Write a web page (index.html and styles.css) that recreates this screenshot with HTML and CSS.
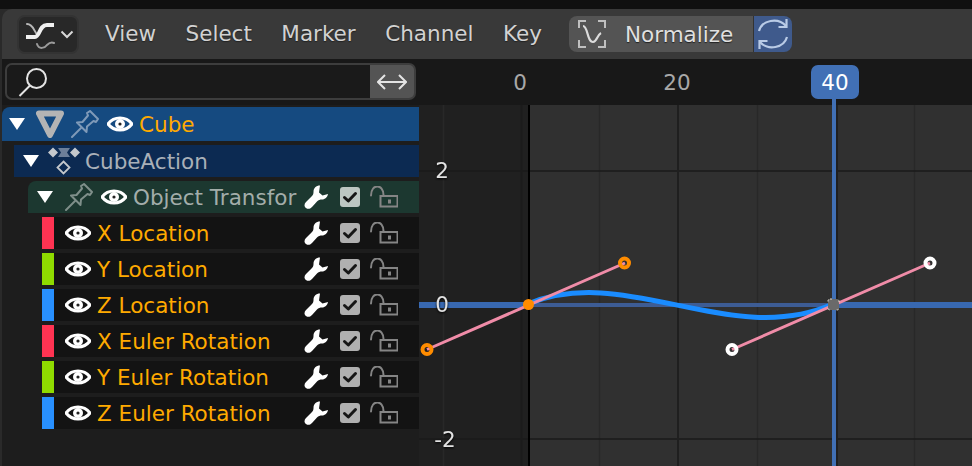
FILE: index.html
```html
<!DOCTYPE html>
<html lang="en">
<head>
<meta charset="utf-8">
<title>Graph Editor</title>
<link rel="stylesheet" href="styles.css">
</head>
<body>
<svg class="defs" width="0" height="0" aria-hidden="true">
  <defs>
    <symbol id="eye" viewBox="0 0 26 18">
      <path d="M1 9C7 1 19 1 25 9C19 17 7 17 1 9Z" fill="none" stroke="#fff" stroke-width="3.200" stroke-linejoin="round"/>
      <circle cx="13" cy="9" r="5" fill="#fff"/>
      <circle cx="13" cy="9" r="1.600" fill="#222"/>
    </symbol>
    <symbol id="pin" viewBox="0 0 28 28">
      <path d="M1 27L10 18" fill="none" stroke="currentColor" stroke-width="2" stroke-linecap="round"/>
      <path d="M6 12.500L11.500 12L17 5.500L16 3L19 1L27 9L25 12L22.500 11L16 16.500L15.500 22Z" fill="none" stroke="currentColor" stroke-width="2" stroke-linejoin="round"/>
    </symbol>
    <symbol id="wrench" viewBox="0 0 24 24">
      <path d="M16 .5C12 .5 9.500 3 9.500 7C9.500 9 9 10 7.500 11.500L2 17C0 19 0 21.500 2 23C4 24.500 6 24 8 22L13 16.500C14.500 15 16 14.500 18 14.500C21 14.500 23.500 12 24 9L18.500 10.500L15 7.500Z" fill="#fff"/>
    </symbol>
    <symbol id="check" viewBox="0 0 20 20">
      <rect width="20" height="20" rx="3" fill="currentColor"/>
      <path d="M4.500 10.500L8.300 14L15.500 6.500" fill="none" stroke="#161616" stroke-width="3" stroke-linecap="round" stroke-linejoin="round"/>
    </symbol>
    <symbol id="lock" viewBox="0 0 28 22">
      <path d="M1 9.500C1 -2.500 13.500 -2.500 13.500 9" fill="none" stroke="#858585" stroke-width="2" stroke-linecap="round"/>
      <rect x="10.500" y="10" width="17" height="10.500" fill="none" stroke="#858585" stroke-width="2"/>
      <rect x="18" y="13.500" width="3" height="4" fill="#858585"/>
    </symbol>
  </defs>
</svg>

<div class="topband"></div>
<header class="header">
  <button class="editor-btn">
    <svg class="icon-editor" viewBox="0 0 30 30" width="30" height="30">
      <path d="M1 4C8 4 8 13 12 15" fill="none" stroke="#b8b8b8" stroke-width="2" stroke-linecap="round"/>
      <path d="M0 17H9C14 17 13 5 21 5H28" fill="none" stroke="#f0f0f0" stroke-width="4"/>
      <path d="M11 24C13 30 19 28 21 25C23 23 26 22 28 23" fill="none" stroke="#9c9c9c" stroke-width="2" stroke-linecap="round"/>
    </svg>
    <svg viewBox="0 0 14 9" width="14" height="9"><path d="M1.500 1.500L7 7L12.500 1.500" fill="none" stroke="#d8d8d8" stroke-width="2"/></svg>
  </button>
  <nav class="menu">
    <span>View</span><span>Select</span><span>Marker</span><span>Channel</span><span>Key</span>
  </nav>
  <div class="normalize">
    <div class="normalize-btn">
      <svg viewBox="0 0 28 28" width="28" height="28">
        <path d="M1 8V1H8M20 1H27V8M27 20V27H20M8 27H1V20" fill="none" stroke="#c0c0c0" stroke-width="2"/>
        <path d="M5 6C10 6 9 22 15 22C19 22 19 15 23 13" fill="none" stroke="#dcdcdc" stroke-width="2.200"/>
      </svg>
      <span>Normalize</span>
    </div>
    <div class="sync-btn">
      <svg viewBox="0 0 32 32" width="32" height="32">
        <path d="M2 13C5 2 21 -1 29 8M30 19C27 30 11 33 3 24" fill="none" stroke="#b9cbe6" stroke-width="2.200"/>
        <path d="M29.500 1V9H21.500M2.500 31V23H10.500" fill="none" stroke="#b9cbe6" stroke-width="2.200"/>
      </svg>
    </div>
  </div>
</header>

<main class="main">
  <aside class="channels">
    <div class="searchbar">
      <div class="search-field">
        <svg viewBox="0 0 30 30" width="30" height="30">
          <circle cx="18.500" cy="11.500" r="9.500" fill="none" stroke="#e4e4e4" stroke-width="2"/>
          <path d="M12 18.500L1.500 29" fill="none" stroke="#e4e4e4" stroke-width="2"/>
        </svg>
      </div>
      <div class="search-toggle">
        <svg viewBox="0 0 30 16" width="30" height="16"><path d="M1 8H29M8 1L1 8L8 15M22 1L29 8L22 15" fill="none" stroke="#e4e4e4" stroke-width="2"/></svg>
      </div>
    </div>
    <div class="tree">
      <div class="row row-object">
        <i class="tri"></i>
        <svg class="mesh" viewBox="0 0 28 28" width="28" height="28"><path d="M3 3.500H25L14 25Z" fill="none" stroke="#b4b4b4" stroke-width="6" stroke-linejoin="round"/></svg>
        <svg class="pin pin-blue"><use href="#pin"/></svg>
        <svg class="eye"><use href="#eye"/></svg>
        <span class="name name-sel">Cube</span>
      </div>
      <div class="row row-action">
        <i class="tri"></i>
        <svg class="action" viewBox="0 0 32 28" width="32" height="28">
          <path d="M5 0.500L10 5.500L5 10.500L0 5.500Z" fill="#c4c8cc"/>
          <path d="M27 0.500L32 5.500L27 10.500L22 5.500Z" fill="#c4c8cc"/>
          <path d="M10 1H22L19 5.500L22 10H10L13 5.500Z" fill="#6d7f99"/>
          <path d="M15.500 14.500L21.500 20.500L15.500 26.500L9.500 20.500Z" fill="none" stroke="#c4c8cc" stroke-width="1.800"/>
        </svg>
        <span class="name name-action">CubeAction</span>
      </div>
      <div class="row row-group">
        <i class="tri"></i>
        <svg class="pin pin-gray"><use href="#pin"/></svg>
        <svg class="eye"><use href="#eye"/></svg>
        <span class="name name-group">Object Transforms</span>
        <div class="tools tools-group">
          <svg class="wrench"><use href="#wrench"/></svg>
          <svg class="check"><use href="#check"/></svg>
          <svg class="lock"><use href="#lock"/></svg>
        </div>
      </div>
      <div class="row row-fcurve">
        <i class="swatch swatch-x"></i>
        <svg class="eye"><use href="#eye"/></svg>
        <span class="name name-sel">X Location</span>
        <div class="tools"><svg class="wrench"><use href="#wrench"/></svg><svg class="check"><use href="#check"/></svg><svg class="lock"><use href="#lock"/></svg></div>
      </div>
      <div class="row row-fcurve">
        <i class="swatch swatch-y"></i>
        <svg class="eye"><use href="#eye"/></svg>
        <span class="name name-sel">Y Location</span>
        <div class="tools"><svg class="wrench"><use href="#wrench"/></svg><svg class="check"><use href="#check"/></svg><svg class="lock"><use href="#lock"/></svg></div>
      </div>
      <div class="row row-fcurve">
        <i class="swatch swatch-z"></i>
        <svg class="eye"><use href="#eye"/></svg>
        <span class="name name-sel">Z Location</span>
        <div class="tools"><svg class="wrench"><use href="#wrench"/></svg><svg class="check"><use href="#check"/></svg><svg class="lock"><use href="#lock"/></svg></div>
      </div>
      <div class="row row-fcurve">
        <i class="swatch swatch-x"></i>
        <svg class="eye"><use href="#eye"/></svg>
        <span class="name name-sel">X Euler Rotation</span>
        <div class="tools"><svg class="wrench"><use href="#wrench"/></svg><svg class="check"><use href="#check"/></svg><svg class="lock"><use href="#lock"/></svg></div>
      </div>
      <div class="row row-fcurve">
        <i class="swatch swatch-y"></i>
        <svg class="eye"><use href="#eye"/></svg>
        <span class="name name-sel">Y Euler Rotation</span>
        <div class="tools"><svg class="wrench"><use href="#wrench"/></svg><svg class="check"><use href="#check"/></svg><svg class="lock"><use href="#lock"/></svg></div>
      </div>
      <div class="row row-fcurve">
        <i class="swatch swatch-z"></i>
        <svg class="eye"><use href="#eye"/></svg>
        <span class="name name-sel">Z Euler Rotation</span>
        <div class="tools"><svg class="wrench"><use href="#wrench"/></svg><svg class="check"><use href="#check"/></svg><svg class="lock"><use href="#lock"/></svg></div>
      </div>
    </div>
  </aside>

  <section class="graph">
    <svg class="plot" viewBox="419 59 553 407" width="553" height="407">
      <rect class="bg-out" x="419" y="105" width="110" height="361"/>
      <rect class="bg-in" x="529" y="105" width="443" height="361"/>
      <g class="grid-minor">
        <path d="M443.500 105V466M599.500 105V466M757.500 105V466M914.500 105V466"/>
      </g>
      <g class="grid-major">
        <path d="M521.500 105V466M678 105V466M837 105V466M419 171H972M419 439H972"/>
      </g>
      <path class="frame-start" d="M529 105V466"/>
      <path class="zero-dim" d="M529 305H833"/>
      <path class="zero" d="M419 305H529M833 305H972"/>
      <path class="curve" d="M528 304C625 263 732 349 833 304"/>
      <path class="playhead" d="M834 98V466"/>
      <path class="handle-line" d="M427 349.500L625 263M732 349.500L930 263"/>
      <circle class="key-orange" cx="528.500" cy="304.500" r="5.500"/>
      <rect class="key-gray" x="828" y="299" width="11" height="11" rx="2"/>
      <circle class="h-orange" cx="427" cy="349.500" r="4.500"/>
      <circle class="h-orange" cx="624.500" cy="263" r="4.500"/>
      <circle class="h-white" cx="732" cy="349.500" r="4.500"/>
      <circle class="h-white" cx="930" cy="263" r="4.500"/>
      <rect class="ruler" x="419" y="59" width="553" height="46"/>
      <path class="playhead" d="M834 98V105"/>
      <rect class="frame-box" x="811" y="65" width="48" height="34" rx="7"/>
      <text class="frame-num" x="520" y="90">0</text>
      <text class="frame-num" x="677" y="90">20</text>
      <text class="frame-cur" x="835" y="90">40</text>
      <text class="val" x="442" y="178">2</text>
      <text class="val" x="442" y="312">0</text>
      <text class="val" x="445" y="447">-2</text>
    </svg>
  </section>
</main>
</body>
</html>
```
FILE: styles.css
```css
* { box-sizing: border-box; }
html, body { margin: 0; height: 100%; }
body {
  width: 972px;
  height: 466px;
  overflow: hidden;
  background: #2a2a2a;
  font-family: "DejaVu Sans", sans-serif;
  font-size: 21.5px;
  display: flex;
  flex-direction: column;
}
.defs { position: absolute; }
.topband { height: 9px; background: #101010; flex: none; }

.header {
  height: 50px;
  flex: none;
  margin-left: 2px;
  padding: 6px 0 0 15px;
  background: #393939;
  border-top-left-radius: 10px;
  display: flex;
  align-items: flex-start;
}
.editor-btn {
  width: 62px;
  height: 39px;
  padding: 0 0 0 7px;
  background: #282828;
  border: 2px solid #333;
  border-radius: 8px;
  display: flex;
  align-items: center;
  gap: 4px;
}
.menu {
  display: flex;
  gap: 29.500px;
  margin-left: 26px;
  height: 37px;
  align-items: center;
  color: #d2d2d2;
  text-shadow: 0 1px 1px #222;
}
.normalize {
  display: flex;
  margin-left: 27px;
  margin-top: 1px;
  height: 36px;
}
.normalize-btn {
  width: 184px;
  padding-left: 9px;
  background: #545454;
  border-radius: 8px 0 0 8px;
  display: flex;
  align-items: center;
  gap: 19px;
  color: #e0e0e0;
  text-shadow: 0 1px 1px #222;
}
.sync-btn {
  width: 39px;
  background: #3f5a8c;
  border-left: 1px solid #333;
  border-radius: 0 8px 8px 0;
  display: flex;
  align-items: center;
  justify-content: center;
}

.main { flex: 1; display: flex; min-height: 0; }

.channels {
  width: 417px;
  flex: none;
  margin-left: 2px;
  background: #1d1d1d;
  display: flex;
  flex-direction: column;
}
.searchbar {
  height: 46px;
  background: #181818;
  padding: 4px 3px 5px 3px;
  display: flex;
  flex: none;
}
.search-field {
  flex: 1;
  background: #1a1a1a;
  border: 2px solid #3d3d3d;
  border-right: 0;
  border-radius: 7px 0 0 7px;
  padding: 2px 0 0 11px;
  display: flex;
  align-items: flex-start;
}
.search-toggle {
  width: 46px;
  background: #545454;
  border: 2px solid #3d3d3d;
  border-left: 0;
  border-radius: 0 7px 7px 0;
  display: flex;
  align-items: center;
  justify-content: center;
}

.tree { display: flex; flex-direction: column; padding-top: 2px; }
.row {
  display: flex;
  align-items: center;
  height: 32px;
  margin-bottom: 4px;
  white-space: nowrap;
  overflow: hidden;
  position: relative;
}
.row-object { height: 34px; background: #154a80; padding-left: 7px; border-radius: 8px 0 0 0; }
.row-action { margin-left: 12px; background: #0c2a52; padding-left: 9px; }
.row-group { margin-left: 26px; background: #1c3830; padding-left: 9px; border-top-left-radius: 8px; }
.row-fcurve { margin-left: 40px; background: #131313; }

.tri {
  width: 0;
  height: 0;
  flex: none;
  border-left: 8px solid transparent;
  border-right: 8px solid transparent;
  border-top: 12px solid #fff;
}
.swatch { width: 12px; height: 32px; flex: none; }
.swatch-x { background: #ff3352; }
.swatch-y { background: #8fdb00; }
.swatch-z { background: #2890ff; }

.mesh { flex: none; margin-left: 11px; }
.pin { width: 28px; height: 28px; flex: none; }
.pin-blue { color: #7f9ab8; margin-left: 7px; }
.pin-gray { color: #7f8f8a; margin-left: 12px; }
.eye { width: 26px; height: 18px; flex: none; margin-left: 8px; }
.row-fcurve .eye { margin-left: 11px; }
.action { flex: none; margin-left: 9px; }
.name { margin-left: 6px; flex: none; }
.name-sel { color: #ffaa00; }
.name-action { margin-left: 5px; color: #a9b0b8; }
.name-group { color: #a3adaa; }

.tools {
  padding-right: 21px;
  display: flex;
  align-items: center;
  height: 100%;
  position: absolute;
  right: 0;
}
.tools-group { background: #1c3830; padding-left: 7px; }
.wrench { width: 24px; height: 24px; flex: none; }
.check { width: 20px; height: 20px; margin-left: 12px; flex: none; color: #b0b0b0; }
.tools-group .check { color: #bcc6c2; }
.lock { width: 28px; height: 22px; margin-left: 10px; flex: none; }

.graph { flex: 1; min-width: 0; }
.plot { display: block; }
.bg-out { fill: #202020; }
.bg-in { fill: #303030; }
.ruler { fill: #181818; }
.grid-minor path { stroke: #282828; stroke-width: 1.500; fill: none; }
.grid-major path { stroke: #1a1a1a; stroke-width: 2; fill: none; opacity: .75; }
.frame-start { stroke: #000; stroke-width: 2; fill: none; }
.zero { stroke: #3868b0; stroke-width: 6; fill: none; }
.zero-dim { stroke: #3d5c94; stroke-width: 4; fill: none; }
.curve { stroke: #1a8cff; stroke-width: 5; fill: none; }
.playhead { stroke: #4170b5; stroke-width: 4; fill: none; }
.handle-line { stroke: #f08ca8; stroke-width: 3; fill: none; }
.key-orange { fill: #ff8c00; }
.key-gray { fill: #6a6a6a; stroke: #e8e0d0; stroke-width: 1; stroke-dasharray: 2 7; }
.h-orange { fill: none; stroke: #ff8c00; stroke-width: 4; }
.h-white { fill: none; stroke: #fff; stroke-width: 4; }
.frame-box { fill: #4170b5; }
.frame-num { fill: #a8a8a8; font-size: 21.5px; text-anchor: middle; }
.frame-cur { fill: #fff; font-size: 21.5px; text-anchor: middle; }
.val { fill: #e2e2e2; font-size: 21.5px; text-anchor: middle; filter: drop-shadow(0 1px 1px #000); }
```
